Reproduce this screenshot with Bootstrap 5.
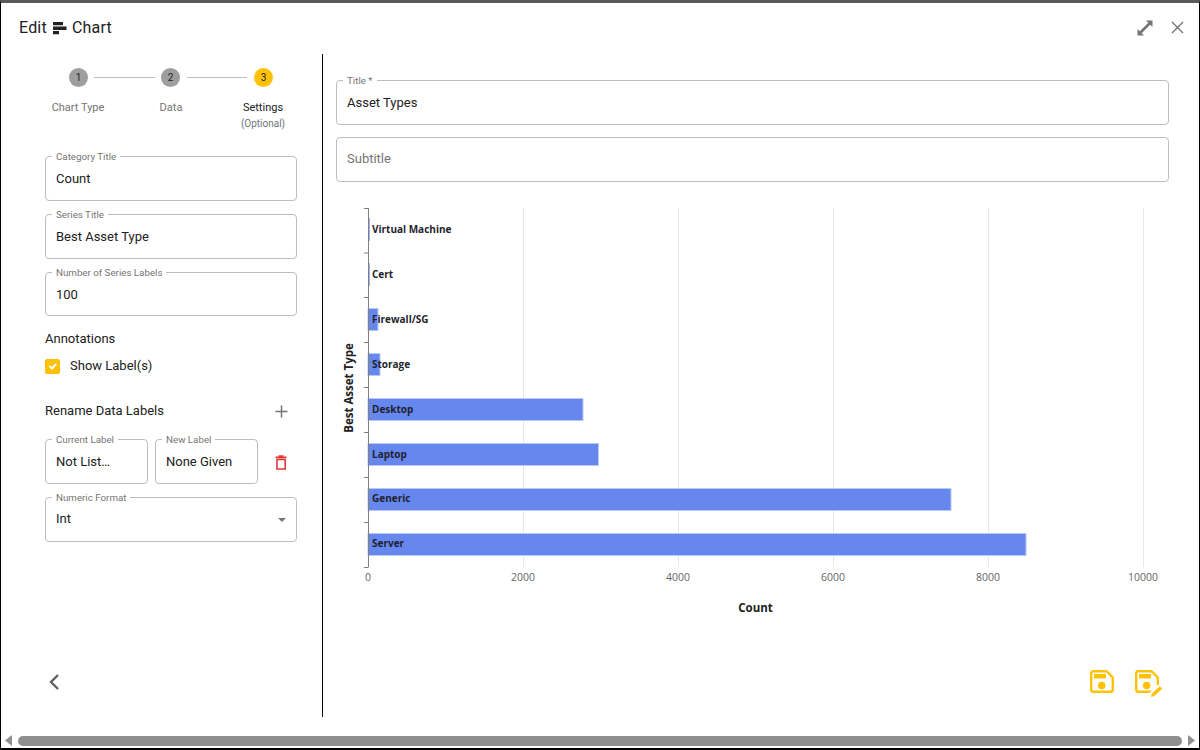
<!DOCTYPE html>
<html lang="en">
<head>
<meta charset="utf-8">
<title>Edit Chart</title>
<link rel="stylesheet" href="https://cdn.jsdelivr.net/npm/bootstrap@5.3.0/dist/css/bootstrap.min.css">
<style>
html,body{margin:0;height:750px;overflow:hidden;background:#fff}
body{font-family:Roboto,"Liberation Sans",sans-serif;color:#212121;font-size:13px}
.shell{width:1200px;height:750px;border-top:3px solid #5a5a5a;border-left:1px solid #000;border-right:1px solid #000;border-bottom:2px solid #000}
.head{height:51px;padding:0 15px 2px 18px}
.head-title{font-size:16px;line-height:20px;gap:5px;letter-spacing:.2px}
.head-tools{gap:18px}
.body-row{height:663px;flex:none}
.left-col{width:322px;flex:none;border-right:1px solid #000;padding-left:44px;padding-right:25px}
.right-col{flex:1;padding-left:13px;padding-right:30px}
.steps{margin-left:24px;margin-top:13px;height:20px}
.dot{width:19px;height:19px;border-radius:50%;background:#9e9e9e;font-size:10px;flex:none}
.dot-on{background:#ffc107}
.link{height:1px;width:61px;background:#bdbdbd;margin:0 6px;flex:none}
.link2{width:60px;margin:0 7px}
.step-labels{margin-left:-13px;width:278px;margin-top:14px;font-size:11px;line-height:13px;color:#757575}
.step-labels>div{width:92px}
.step-labels>.step-mid{margin-left:1px}
.step-on{color:#212121}
.step-opt{font-size:10px;line-height:14px;margin-top:3px}
.fld{border:1px solid #bdbdbd;border-radius:4px;padding:0 10px;height:50px;margin:0;min-width:0}
.fld legend{float:none;width:auto;font-size:9.750px;line-height:11px;padding:0 4px;margin:0 0 0 -4px;color:#757575;height:10px}
.fld-val{font-size:13px;line-height:16px;margin-top:10px;white-space:nowrap}
.fld-plain{height:45px}
.fld-plain .fld-val{margin-top:13px;color:#757575}
.f1{margin-top:20px}
.f2{margin-top:8px}
.fld-short{height:49px}
.fld-val.val-up{margin-top:9px}
.anno{margin-top:15px;line-height:16px}
.check-row{margin-top:11px;gap:10px;line-height:16px}
.check-row .form-check-input{width:15px;height:15px;margin:0;border-radius:2px;background-color:#ffc107;border-color:#ffc107;opacity:1;flex:none}
.rename{margin-top:29px;line-height:16px;padding-right:9px}
.pair{margin-top:15px;gap:7px}
.pair .fld{width:103px;flex:none}
.trash{margin-left:10px;margin-top:6px}
.sel-caret{width:0;height:0;border-left:4.500px solid transparent;border-right:4.500px solid transparent;border-top:4.500px solid #757575;margin-top:2px}
.back{margin-top:129px;margin-left:3px}
.t1{margin-top:21px}
.t2{margin-top:12px}
.plot{display:block;margin-top:13px}
.plot text{font-family:"Open Sans","Noto Sans",sans-serif}
.saves{gap:21px;padding-right:6px;margin-top:45px}
.bar{height:15px;padding:0 3px;margin-top:auto}
.thumb{height:10px;background:#8f8f8f;border-radius:5px;flex:1;margin:0 5px}
</style>
</head>
<body>
<div class="shell d-flex flex-column">
  <div class="head d-flex justify-content-between align-items-center">
    <div class="head-title d-flex align-items-center">
      <span>Edit</span>
      <svg width="15" height="14" viewBox="0 0 15 14"><path fill="#212121" d="M1 1h10v3.200H1zM1 5.500h13.500v3.600H1zM1 10h6v3.200H1z"/></svg>
      <span>Chart</span>
    </div>
    <div class="head-tools d-flex align-items-center">
      <svg width="16" height="16" viewBox="0 0 16 16" fill="#757575"><path d="M9 0.500h6.500V7l-2.300-2.300-8.500 8.500L7 15.500H0.500V9l2.300 2.300 8.500-8.500z"/></svg>
      <svg width="13" height="13" viewBox="0 0 13 13" fill="none" stroke="#757575" stroke-width="1.400"><path d="M1 1l11 11M12 1L1 12"/></svg>
    </div>
  </div>
  <div class="body-row d-flex">
    <div class="left-col">
      <div class="steps d-flex align-items-center">
        <div class="dot d-flex align-items-center justify-content-center">1</div><div class="link"></div>
        <div class="dot d-flex align-items-center justify-content-center">2</div><div class="link link2"></div>
        <div class="dot dot-on d-flex align-items-center justify-content-center">3</div>
      </div>
      <div class="step-labels d-flex text-center">
        <div>Chart Type</div>
        <div class="step-mid">Data</div>
        <div class="step-on">Settings<div class="step-opt text-secondary">(Optional)</div></div>
      </div>
      <fieldset class="fld f1"><legend>Category Title</legend><div class="fld-val">Count</div></fieldset>
      <fieldset class="fld f2"><legend>Series Title</legend><div class="fld-val">Best Asset Type</div></fieldset>
      <fieldset class="fld f2 fld-short"><legend>Number of Series Labels</legend><div class="fld-val">100</div></fieldset>
      <div class="anno">Annotations</div>
      <div class="check-row d-flex align-items-center"><input class="form-check-input" type="checkbox" checked aria-label="Show Label(s)"><span>Show Label(s)</span></div>
      <div class="rename d-flex justify-content-between align-items-center"><span>Rename Data Labels</span>
        <svg width="13" height="13" viewBox="0 0 13 13" stroke="#757575" stroke-width="1.500"><path d="M6.500 0.500v12M0.500 6.500h12"/></svg></div>
      <div class="pair d-flex align-items-center">
        <fieldset class="fld"><legend>Current Label</legend><div class="fld-val">Not List…</div></fieldset>
        <fieldset class="fld"><legend>New Label</legend><div class="fld-val">None Given</div></fieldset>
        <svg class="trash" width="12" height="15" viewBox="0 0 12 15" fill="none" stroke="#e53935" stroke-width="1.600"><path d="M2 4.500h8.200V14H2zM0.500 2.400h11M3.500 1h5"/></svg>
      </div>
      <fieldset class="fld f2"><legend>Numeric Format</legend><div class="d-flex justify-content-between align-items-center fld-val val-up"><span>Int</span><span class="sel-caret"></span></div></fieldset>
      <div class="back">
        <svg width="12" height="18" viewBox="0 0 12 18" fill="none" stroke="#616161" stroke-width="2.400"><path d="M10 2L3 9l7 7"/></svg>
      </div>
    </div>
    <div class="right-col">
      <fieldset class="fld t1"><legend>Title *</legend><div class="fld-val">Asset Types</div></fieldset>
      <fieldset class="fld fld-plain t2"><div class="fld-val">Subtitle</div></fieldset>
      <svg class="plot" width="833" height="430" viewBox="336 195 833 430" role="img" aria-label="Asset Types chart">
        <g stroke="#e6e6ec" stroke-width="1">
          <path d="M523.500 208v359M678.500 208v359M833.500 208v359M988.500 208v359M1143.500 208v359"/>
        </g>
        <g fill="#6688ee" stroke="#b9c8f6" stroke-width="1">
          <rect x="368" y="308.500" width="10" height="22"/>
          <rect x="368" y="353.500" width="12" height="22"/>
          <rect x="368" y="398.500" width="215" height="22"/>
          <rect x="368" y="443.500" width="230.500" height="22"/>
          <rect x="368" y="488.500" width="583" height="22"/>
          <rect x="368" y="533.500" width="658" height="22"/>
        </g>
        <path stroke="#808080" stroke-width="1" fill="none" d="M368.500 208v359.500M364 208.500h4M364 253h4M364 297.500h4M364 342.500h4M364 387.500h4M364 432.500h4M364 477.500h4M364 522.500h4M364 567.500h4"/>
        <g fill="#9db2f3">
          <rect x="369" y="218" width="1" height="23"/>
          <rect x="369" y="263" width="1" height="23"/>
        </g>
        <g font-size="10" font-weight="700" fill="#1f1f2e">
          <text x="372" y="232.500">Virtual Machine</text>
          <text x="372" y="277.500">Cert</text>
          <text x="372" y="323">Firewall/SG</text>
          <text x="372" y="368">Storage</text>
          <text x="372" y="412.500">Desktop</text>
          <text x="372" y="457.500">Laptop</text>
          <text x="372" y="502">Generic</text>
          <text x="372" y="547">Server</text>
        </g>
        <g font-size="10.500" fill="#666" text-anchor="middle">
          <text x="368" y="581">0</text>
          <text x="523" y="581">2000</text>
          <text x="678" y="581">4000</text>
          <text x="833" y="581">6000</text>
          <text x="988" y="581">8000</text>
          <text x="1143" y="581">10000</text>
        </g>
        <text x="755.500" y="611.500" font-size="11.500" font-weight="700" fill="#212121" text-anchor="middle">Count</text>
        <text transform="translate(353 388) rotate(-90)" font-size="11.500" font-weight="700" fill="#212121" text-anchor="middle">Best Asset Type</text>
      </svg>
      <div class="saves d-flex justify-content-end align-items-start">
        <svg width="24" height="27" viewBox="0 0 24 27" fill="none"><path d="M3.200 1.200h13.300l6.300 6.300v12.300a2 2 0 0 1-2 2H3.200a2 2 0 0 1-2-2V3.200a2 2 0 0 1 2-2z" stroke="#ffc107" stroke-width="2.400"/><path fill="#ffc107" d="M4 4h12v4.500H4z"/><circle cx="11.700" cy="15.500" r="3.800" fill="#ffc107"/></svg>
        <svg width="28" height="27" viewBox="0 0 28 27" fill="none"><path d="M3.200 1.200h13.300l6.300 6.300v12.300a2 2 0 0 1-2 2H3.200a2 2 0 0 1-2-2V3.200a2 2 0 0 1 2-2z" stroke="#ffc107" stroke-width="2.400"/><path fill="#ffc107" d="M4 4h12v4.500H4z"/><circle cx="11.700" cy="15.500" r="3.800" fill="#ffc107"/><path d="M17.500 25.500L26 17.500" stroke="#fff" stroke-width="8"/><path d="M19 24l7-6.500" stroke="#ffc107" stroke-width="3.600"/><path d="M16 27l1.200-4.500 3.200 3.200z" fill="#ffc107"/></svg>
      </div>
    </div>
  </div>
  <div class="bar d-flex align-items-center">
    <svg width="9" height="11" viewBox="0 0 9 11"><path fill="#8f8f8f" d="M8 0v11L1 5.500z"/></svg>
    <div class="thumb"></div>
    <svg width="9" height="11" viewBox="0 0 9 11"><path fill="#8f8f8f" d="M1 0v11l7-5.500z"/></svg>
  </div>
</div>
<script src="https://cdn.jsdelivr.net/npm/bootstrap@5.3.0/dist/js/bootstrap.bundle.min.js"></script>
</body>
</html>
